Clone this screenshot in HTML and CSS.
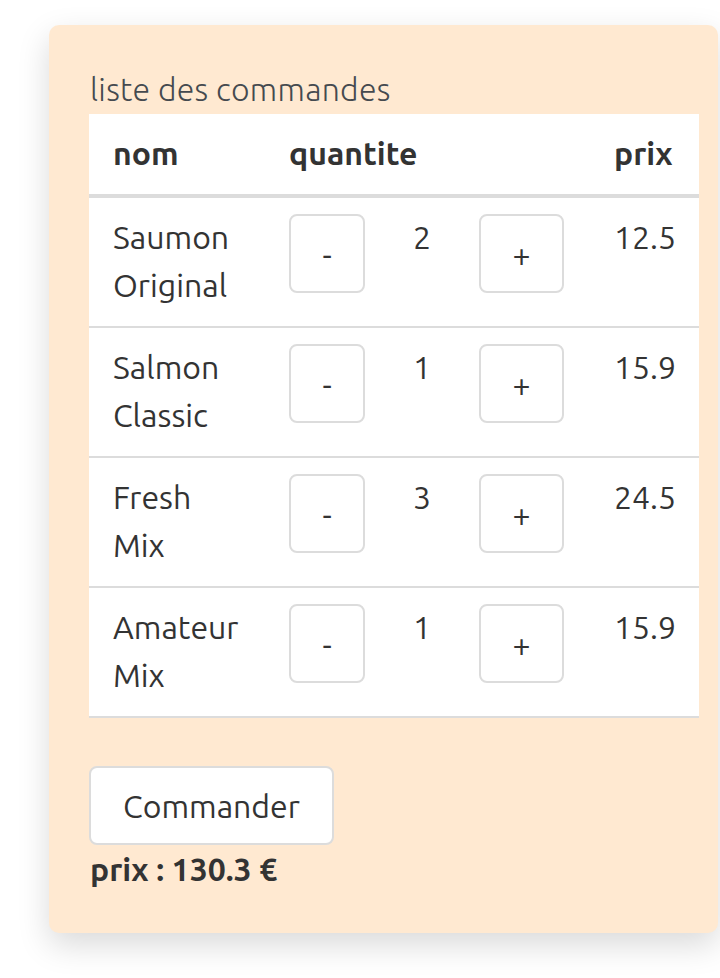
FILE: index.html
```html
<!DOCTYPE html>
<html lang="fr">
<head>
<meta charset="utf-8">
<title>liste des commandes</title>
<link rel="stylesheet" href="styles.css">
</head>
<body>
<div class="card">
  <table class="orders">
    <caption>liste des commandes</caption>
    <colgroup>
      <col class="c-name"><col class="c-minus"><col class="c-qty"><col class="c-plus"><col class="c-price">
    </colgroup>
    <thead>
      <tr><th>nom</th><th colspan="3">quantite</th><th>prix</th></tr>
    </thead>
    <tbody>
      <tr><td>Saumon Original</td><td><button class="qbtn minus">-</button></td><td>2</td><td><button class="qbtn plus">+</button></td><td>12.5</td></tr>
      <tr><td>Salmon Classic</td><td><button class="qbtn minus">-</button></td><td>1</td><td><button class="qbtn plus">+</button></td><td>15.9</td></tr>
      <tr><td>Fresh Mix</td><td><button class="qbtn minus">-</button></td><td>3</td><td><button class="qbtn plus">+</button></td><td>24.5</td></tr>
      <tr><td>Amateur Mix</td><td><button class="qbtn minus">-</button></td><td>1</td><td><button class="qbtn plus">+</button></td><td>15.9</td></tr>
    </tbody>
  </table>
  <button class="order-btn">Commander</button>
  <p class="total">prix : 130.3 €</p>
</div>
</body>
</html>
```

FILE: styles.css
```css
html, body {
  margin: 0;
  padding: 0;
  background: #ffffff;
}
body {
  font-family: "Ubuntu", "Open Sans", "Noto Sans", sans-serif;
  font-size: 32px;
  line-height: 48px;
  color: #333333;
  padding-bottom: 45px;
}
.card {
  margin: 25px 0 0 49px;
  width: 610px;
  padding: 40px 19px 40px 40px;
  background: #ffe9d1;
  border-radius: 10px;
  box-shadow: 0 12px 32px rgba(0, 0, 0, 0.15);
}
.orders {
  width: 610px;
  table-layout: fixed;
  border-collapse: collapse;
  background: #ffffff;
}
.orders caption {
  caption-side: top;
  text-align: left;
  padding: 0 0 1px 1px;
  font-weight: 300;
  letter-spacing: 0.28px;
  color: #454a4f;
  background: #ffe9d1;
}
.c-name { width: 176px; }
.c-minus { width: 124px; }
.c-qty { width: 66px; }
.c-plus { width: 135px; }
.c-price { width: 109px; }
.orders th,
.orders td {
  padding: 15px 24px 17px 24px;
  text-align: left;
  vertical-align: top;
}
.orders th {
  font-weight: 700;
  border-bottom: 4px solid #dcdcdc;
}
.orders td {
  border-bottom: 2px solid #dcdcdc;
}
.qbtn {
  display: flex;
  align-items: center;
  justify-content: center;
  height: 79px;
  padding: 0;
  margin: 1px 0 0 0;
  background: #ffffff;
  border: 2px solid #dcdcdc;
  border-radius: 8px;
  font-family: inherit;
  font-size: 32px;
  line-height: 48px;
  color: #333333;
}
.qbtn.minus { width: 76px; }
.qbtn.plus { width: 85px; }
.order-btn {
  display: block;
  margin: 48px 0 0 0;
  width: 245px;
  height: 79px;
  padding: 0;
  background: #ffffff;
  border: 2px solid #dcdcdc;
  border-radius: 8px;
  font-family: inherit;
  font-size: 32px;
  line-height: 48px;
  color: #333333;
}
.total {
  margin: 0;
  padding-left: 1px;
  font-weight: 700;
}
```
